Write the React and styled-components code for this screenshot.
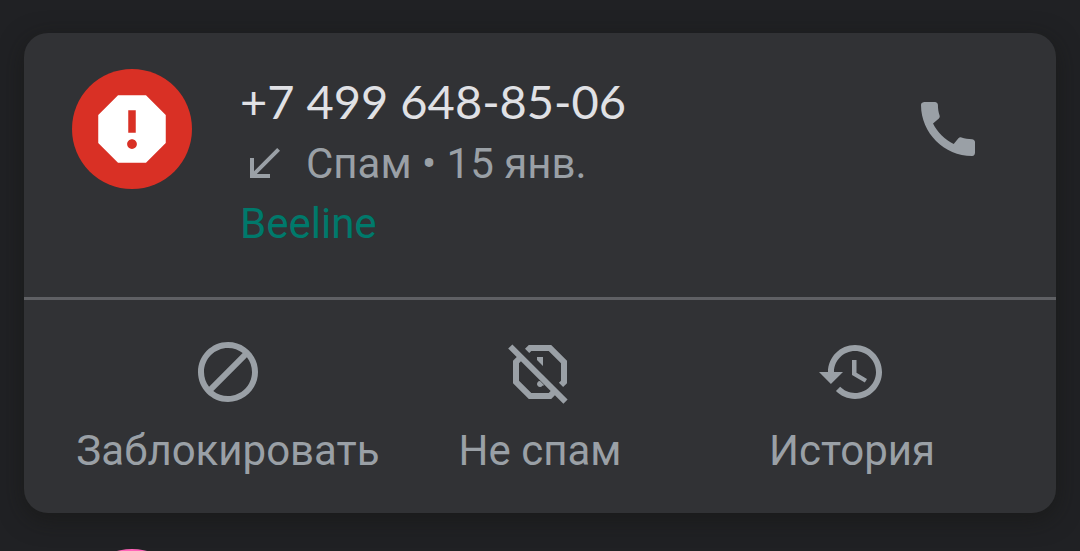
import React from "react";
import styled, { createGlobalStyle } from "styled-components";

const GlobalStyle = createGlobalStyle`
  html {
    background-color: #202124;
    scrollbar-width: none;
  }
  body {
    margin: 0;
    font-family: Roboto, "Noto Sans", sans-serif;
    color: #9aa0a6;
  }
`;

const Page = styled.main`
  padding: 33px 24px 0;
`;

const Card = styled.section`
  border-radius: 24px;
  background-color: #313235;
  box-shadow: 0 6px 24px rgba(20, 20, 16, 0.5);
`;

const CallRow = styled.div`
  display: flex;
  align-items: flex-start;
  padding: 36px 48px 43px;
`;

const Avatar = styled.div`
  display: flex;
  flex-shrink: 0;
  justify-content: center;
  align-items: center;
  width: 120px;
  height: 120px;
  border-radius: 50%;
  background-color: ${(props) => props.$color};
`;

const Details = styled.div`
  flex: 1;
  min-width: 0;
  margin-left: 48px;
  font-size: 42px;
  line-height: 60px;
`;

const Number = styled.h1`
  margin: 0;
  font-family: Lato, Roboto, sans-serif;
  font-size: 47px;
  font-weight: 400;
  line-height: 65px;
  color: #e0e1e5;
`;

const CallInfo = styled.div`
  display: flex;
  align-items: center;
  gap: 18px;
`;

const Carrier = styled.div`
  color: #00796b;
`;

const IconButton = styled.button`
  display: flex;
  margin: 24px 24px 0 0;
  padding: 0;
  border: none;
  background: none;
  color: inherit;
  cursor: pointer;
`;

const Actions = styled.div`
  display: grid;
  grid-template-columns: repeat(3, 1fr);
  padding: 36px 48px 32px;
  border-top: 3px solid #5f6064;
`;

const ActionButton = styled.button`
  display: flex;
  flex-direction: column;
  align-items: center;
  gap: 13px;
  padding: 0;
  border: none;
  background: none;
  color: inherit;
  font-family: inherit;
  font-size: 42px;
  line-height: 60px;
  white-space: nowrap;
  cursor: pointer;
`;

const Svg = styled.svg.attrs({ viewBox: "0 0 24 24", "aria-hidden": true })`
  display: block;
  flex-shrink: 0;
  width: ${(props) => props.$size}px;
  height: ${(props) => props.$size}px;
  fill: currentColor;
`;

const SpamIcon = styled(Svg)`
  color: #ffffff;
`;

const actions = [
  {
    label: "Заблокировать",
    path: "M12 2C6.48 2 2 6.48 2 12s4.48 10 10 10 10-4.48 10-10S17.52 2 12 2zM4 12c0-4.42 3.58-8 8-8 1.85 0 3.55.63 4.9 1.69L5.69 16.9C4.63 15.55 4 13.85 4 12zm8 8c-1.85 0-3.55-.63-4.9-1.69L18.31 7.1C19.37 8.45 20 10.15 20 12c0 4.42-3.58 8-8 8z",
  },
  {
    label: "Не спам",
    path: "M2.8 2.8L1.4 4.2l2.84 2.84L3 8.27v7.46L8.27 21h7.46l1.24-1.23 2.83 2.83 1.4-1.4zM5.65 8.45l5.5 5.5 4.4 4.4-.65.65H9.1L5 14.9V9.1zM9.1 5h5.8L19 9.1v5.8l-.7.7 1.41 1.42L21 15.73V8.27L15.73 3H8.27L7 4.27l1.41 1.42zM11 7h2v3l-2-2zM12 15l1.4 1.4-.6.2a1 1 0 1 1-.8-1.6z",
  },
  {
    label: "История",
    path: "M13 3c-4.97 0-9 4.03-9 9H1l3.89 3.89.07.14L9 12H6c0-3.87 3.13-7 7-7s7 3.13 7 7-3.13 7-7 7c-1.93 0-3.68-.79-4.94-2.06l-1.42 1.42C8.27 19.99 10.51 21 13 21c4.97 0 9-4.03 9-9s-4.03-9-9-9zm-1 5v5l4.28 2.54.72-1.21-3.5-2.08V8z",
  },
];

const App = () => {
  return (
    <>
      <GlobalStyle />
      <Page>
        <Card>
          <CallRow>
            <Avatar $color="#d93025">
              <SpamIcon $size={90}>
                <path
                  fillRule="evenodd"
                  d="M15.73 3H8.27L3 8.27v7.46L8.27 21h7.46L21 15.73V8.27L15.73 3zM12 17.3c-.72 0-1.3-.58-1.3-1.3 0-.72.58-1.3 1.3-1.3.72 0 1.3.58 1.3 1.3 0 .72-.58 1.3-1.3 1.3zm1-4.3h-2V7h2v6z"
                />
              </SpamIcon>
            </Avatar>
            <Details>
              <Number>+7 499 648-85-06</Number>
              <CallInfo>
                <Svg $size={48}>
                  <path d="M20 5.41L18.59 4 7 15.59V9H5v10h10v-2H8.41z" />
                </Svg>
                <span>Спам • 15 янв.</span>
              </CallInfo>
              <Carrier>Beeline</Carrier>
            </Details>
            <IconButton aria-label="Позвонить">
              <Svg $size={72}>
                <path d="M20.01 15.38c-1.23 0-2.42-.2-3.53-.56-.35-.12-.74-.03-1.01.24l-1.57 1.97c-2.83-1.35-5.48-3.9-6.89-6.83l1.95-1.66c.27-.28.35-.67.24-1.02-.37-1.11-.56-2.3-.56-3.53 0-.54-.45-.99-.99-.99H4.19C3.65 3 3 3.24 3 3.99 3 13.28 10.73 21 20.01 21c.71 0 .99-.63.99-1.18v-3.45c0-.54-.45-.99-.99-.99z" />
              </Svg>
            </IconButton>
          </CallRow>
          <Actions>
            {actions.map((action) => (
              <ActionButton key={action.label}>
                <Svg $size={72}>
                  <path fillRule="evenodd" d={action.path} />
                </Svg>
                {action.label}
              </ActionButton>
            ))}
          </Actions>
        </Card>
        <CallRow>
          <Avatar $color="#ff63b8" />
        </CallRow>
      </Page>
    </>
  );
};

export default App;
